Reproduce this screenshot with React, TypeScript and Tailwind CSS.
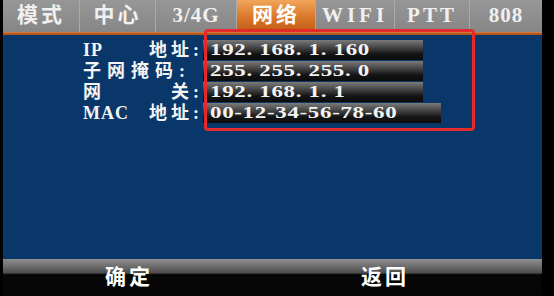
import React from 'react';

const TABS = [
  { label: '模式', w: 'w-[76px]', track: 'tracking-[3px]' },
  { label: '中心', w: 'w-[76px]', track: 'tracking-[3px]' },
  { label: '3/4G', w: 'w-[81px]', track: 'tracking-[1px]' },
  { label: '网络', w: 'w-[79px]', track: 'tracking-[3px]', active: true },
  { label: 'WIFI', w: 'w-[79px]', track: 'tracking-[4px]' },
  { label: 'PTT', w: 'w-[75px]', track: 'tracking-[3px]' },
  { label: '808', w: 'w-[73px]', track: 'tracking-[1px]' },
];

const FONT = "font-['Liberation_Serif','Noto_Sans_CJK_SC',serif]";

export default function App() {
  return (
    <div className={`w-[554px] h-[296px] bg-black flex overflow-hidden ${FONT}`}>
      <div className="ml-[3px] w-[539px] h-full flex flex-col relative">
        {/* tab bar */}
        <div className="h-[32px] flex bg-[#8c8c8c]">
          {TABS.map((t, i) => (
            <div
              key={t.label}
              className={`${t.w} h-full flex items-center justify-center text-[21px] font-bold ${t.track} ${
                i > 0 ? 'border-l border-[#aaaaaa]' : ''
              } ${
                t.active
                  ? 'bg-[linear-gradient(to_bottom,#f2a65a,#d8772a_55%,#c25a12)] text-white'
                  : 'bg-[linear-gradient(to_bottom,#979797,#868686)] text-[#f0f0f0]'
              }`}
            >
              {t.label}
            </div>
          ))}
        </div>
        <div className="h-[3px] bg-[#b4561d] border-t border-[#d27a3a]" />

        {/* body */}
        <div className="h-[224px] bg-[#093769] pt-[4px] pl-[80px] text-[#f4f4f4]">
          <Row label={<Split a="IP" b="地址:" />} value="192. 168. 1. 160" bar="w-[220px]" />
          <Row label={<span className="tracking-[6px]">子网掩码:</span>} value="255. 255. 255. 0" bar="w-[220px]" />
          <Row label={<Split a="网" b="关:" />} value="192. 168. 1. 1" bar="w-[220px]" />
          <Row label={<Split a="MAC" b="地址:" />} value="00-12-34-56-78-60" bar="w-[238px]" />
        </div>

        {/* bottom bar */}
        <div className="flex-1 flex items-center bg-[linear-gradient(to_bottom,#8e8e8e_0%,#6a6a6a_22%,#4a4a4a_38%,#070707_42%,#050505_100%)] text-white text-[21px] font-bold tracking-[3px]">
          <span className="ml-[102px]">确定</span>
          <span className="ml-[208px]">返回</span>
        </div>

        {/* red annotation */}
        <div className="absolute left-[201px] top-[29px] w-[271px] h-[102px] border-[3px] border-[#e42a2a] rounded-[4px]" />
      </div>
    </div>
  );
}

function Split({ a, b }: { a: string; b: string }) {
  return (
    <span className="flex justify-between w-full">
      <span className="tracking-[1px]">{a}</span>
      <span className="tracking-[4px]">{b}</span>
    </span>
  );
}

function Row({ label, value, bar }: { label: React.ReactNode; value: string; bar: string }) {
  return (
    <div className="h-[21px] flex items-center">
      <div className="w-[120px] flex text-[18px] font-bold leading-none">{label}</div>
      <div
        className={`${bar} h-[20px] flex items-center pl-[7px] bg-[linear-gradient(to_bottom,#7a7a7a,#3a3a3a_45%,#141414_70%,#0c0c0c)]`}
      >
        <span className="inline-block origin-left scale-x-[1.35] text-[17px] font-bold leading-none tracking-[0.5px] whitespace-nowrap">
          {value}
        </span>
      </div>
    </div>
  );
}
